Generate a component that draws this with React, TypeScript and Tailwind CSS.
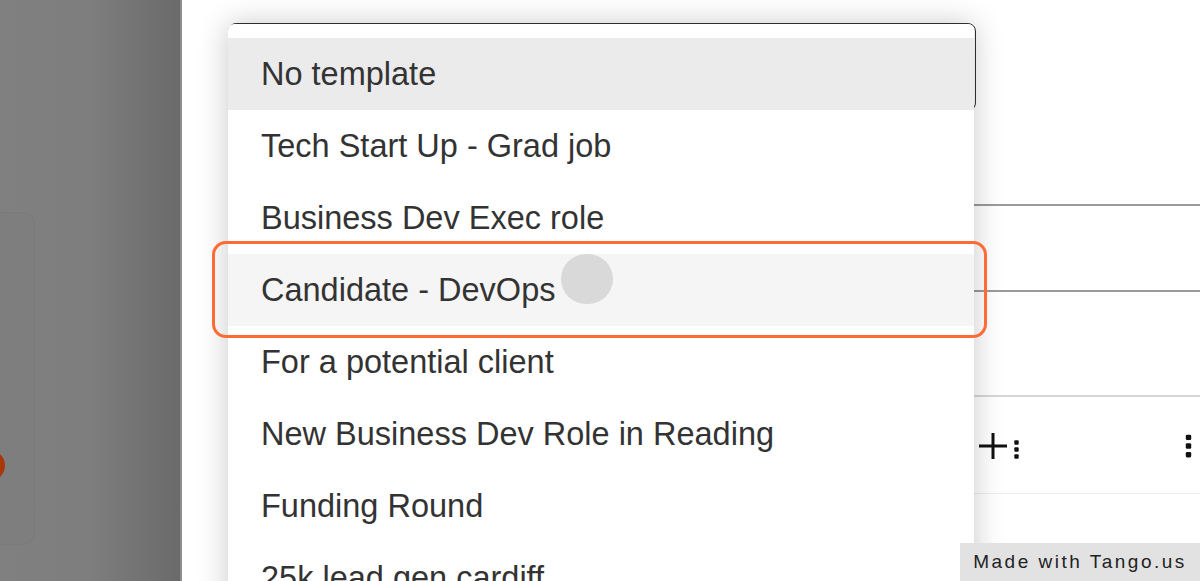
import React from "react";

const templates = [
  "No template",
  "Tech Start Up - Grad job",
  "Business Dev Exec role",
  "Candidate - DevOps",
  "For a potential client",
  "New Business Dev Role in Reading",
  "Funding Round",
  "25k lead gen cardiff",
];

const DotsIcon = ({ className = "" }: { className?: string }) => (
  <svg viewBox="0 0 6 24" className={className} fill="#111">
    <rect x="0.5" y="1.5" width="5" height="5" rx="1.2" />
    <rect x="0.5" y="9.5" width="5" height="5" rx="1.2" />
    <rect x="0.5" y="17.5" width="5" height="5" rx="1.2" />
  </svg>
);

const PlusIcon = ({ className = "" }: { className?: string }) => (
  <svg viewBox="0 0 30 28" className={className} stroke="#111" strokeWidth="3" fill="none">
    <path d="M1 14h28M15 1v26" />
  </svg>
);

export default function App() {
  return (
    <div
      className="w-[1200px] h-[581px] flex overflow-hidden relative bg-white"
      style={{ fontFamily: '"Liberation Sans", Arial, sans-serif' }}
    >
      {/* Dimmed side panel */}
      <aside className="w-[182px] shrink-0 relative bg-gradient-to-r from-[#808080] via-[#7e7e7e] to-[#6a6a6a] border-r-2 border-[#8d8d8d]">
        <div className="absolute left-[-20px] top-[212px] w-[55px] h-[333px] rounded-[12px] border border-[#7a7a7a] bg-[#7e7e7e]" />
        <div className="absolute left-[-26px] top-[450px] w-[31px] h-[31px] rounded-full bg-[#a8380a]" />
      </aside>

      {/* Form behind the menu */}
      <main className="flex-1 relative">
        <div className="flex flex-col pt-[204px] pl-[80px]">
          <div className="h-[86px] border-t-2 border-[#9a9a9a]" />
          <div className="h-[105px] border-t-2 border-[#9a9a9a]" />
          <div className="h-[98px] border-t-2 border-[#d6d6d6] flex items-center justify-between pl-[716px] pr-[8px]">
            <div className="flex items-center gap-[5px] mt-[2px]">
              <PlusIcon className="w-[30px] h-[28px]" />
              <DotsIcon className="w-[7px] h-[21px] mt-[6px]" />
            </div>
            <DotsIcon className="w-[7px] h-[26px] mt-[2px]" />
          </div>
          <div className="border-t border-[#ececec]" />
        </div>

        {/* Select input outline */}
        <div className="absolute left-[46px] top-[23px] w-[748px] h-[88px] rounded-[8px] border border-[#333]" />

        {/* Dropdown menu */}
        <div className="absolute left-[46px] top-[24px] w-[746px] h-[600px] rounded-t-[6px] bg-white shadow-[0_0_30px_rgba(0,0,0,0.22)] pt-[14px] overflow-hidden">
          <ul className="flex flex-col">
            {templates.map((t, i) => (
              <li
                key={t}
                className={
                  "h-[72px] shrink-0 flex items-center pl-[33px] text-[32.5px] text-[#333] whitespace-nowrap " +
                  (i === 0 ? "bg-[#ebebeb]" : i === 3 ? "bg-[#f5f5f5]" : "bg-white")
                }
              >
                {t}
              </li>
            ))}
          </ul>
        </div>

        {/* Highlight callout */}
        <div className="absolute left-[30px] top-[241px] w-[775px] h-[97px] rounded-[14px] border-[3px] border-[#ff6b35]" />
        <div className="absolute left-[379px] top-[254px] w-[52px] h-[50px] rounded-full bg-[#d9d9d9]" />
      </main>

      {/* Watermark */}
      <div className="absolute right-0 bottom-0 w-[240px] h-[38px] bg-[#e2e2e2] flex items-center justify-center text-[19px] tracking-[2.5px] text-[#222]">
        Made with Tango.us
      </div>
    </div>
  );
}
